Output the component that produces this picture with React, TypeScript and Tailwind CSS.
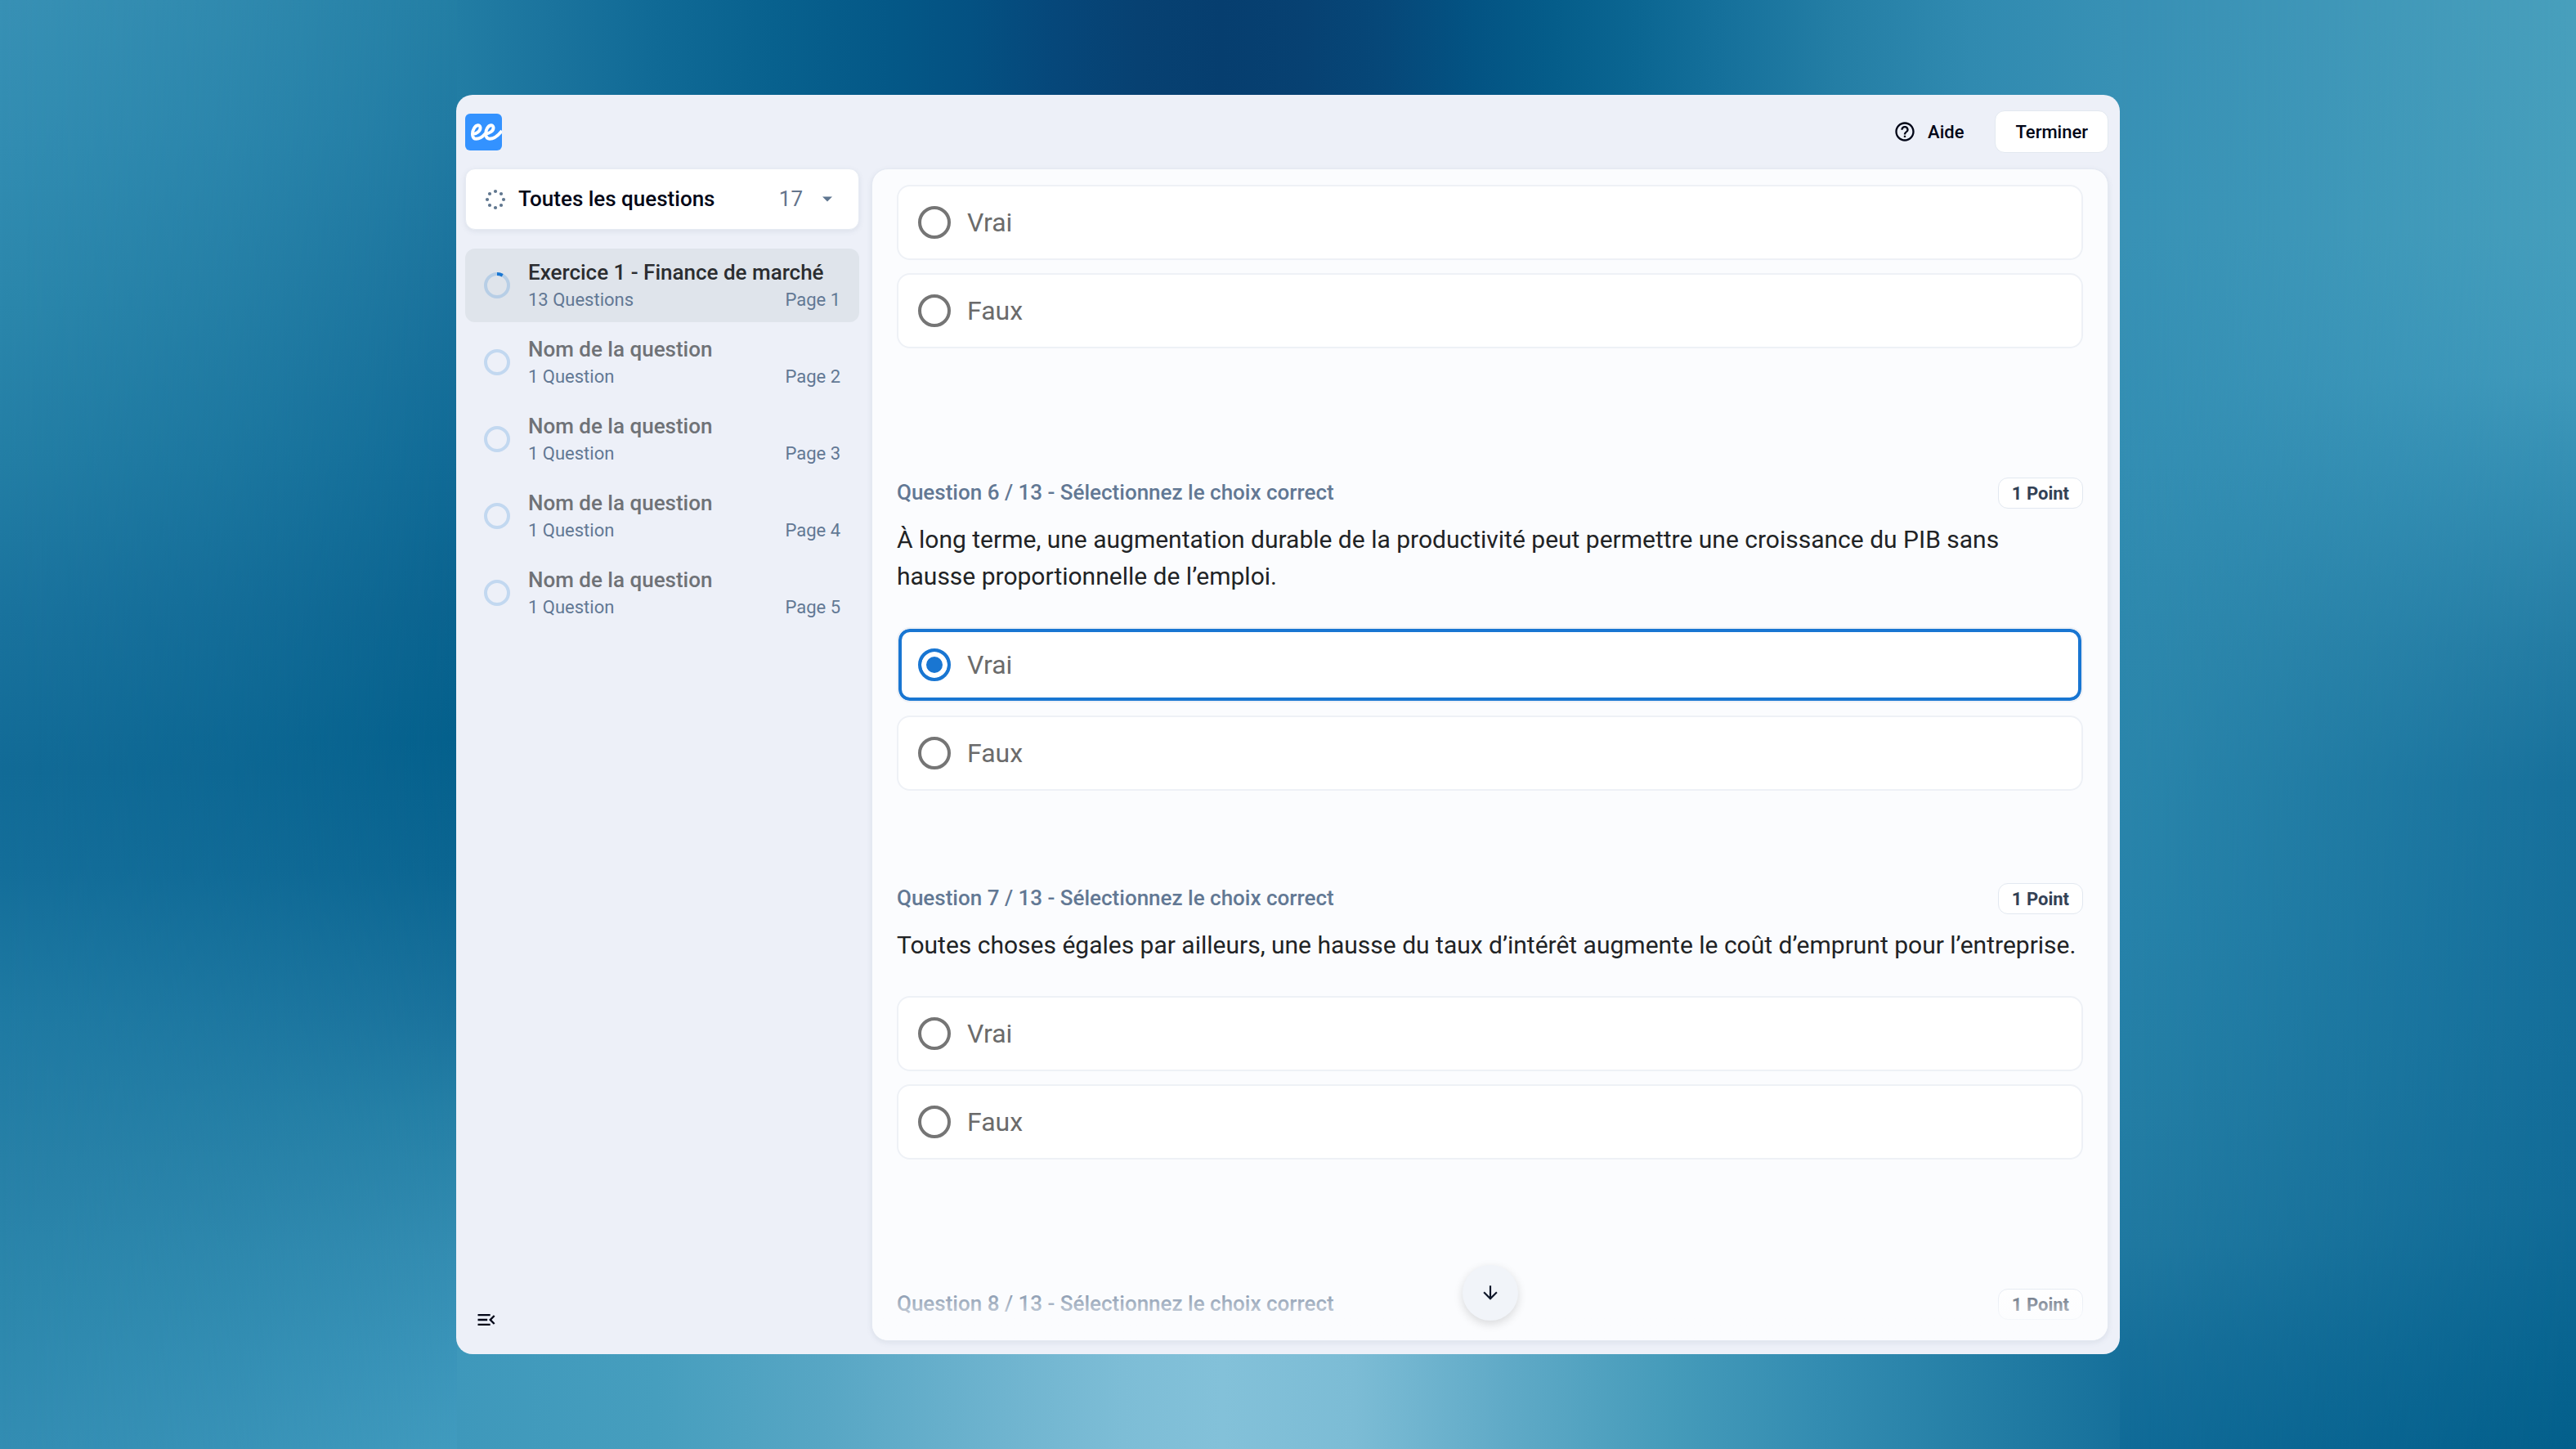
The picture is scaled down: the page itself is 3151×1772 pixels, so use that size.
import { useState } from "react";
import { MdArrowDownward, MdHelpOutline, MdMenuOpen } from "react-icons/md";

const pages = [
  { title: "Exercice 1 - Finance de marché", count: "13 Questions", progress: 8 },
  { title: "Nom de la question", count: "1 Question", progress: 0 },
  { title: "Nom de la question", count: "1 Question", progress: 0 },
  { title: "Nom de la question", count: "1 Question", progress: 0 },
  { title: "Nom de la question", count: "1 Question", progress: 0 },
];

const questions = [
  {
    id: 6,
    text: "À long terme, une augmentation durable de la productivité peut permettre une croissance du PIB sans hausse proportionnelle de l’emploi.",
  },
  {
    id: 7,
    text: "Toutes choses égales par ailleurs, une hausse du taux d’intérêt augmente le coût d’emprunt pour l’entreprise.",
  },
];

type Stop = [number, string];

// vertical colour ramps, offsets in percent
const farLeft: Stop[] = [
  [0, "#3891b5"], [10, "#328db2"], [21, "#2b87ac"], [32, "#237ea5"], [42, "#1a739e"],
  [53, "#126b97"], [60, "#146e9a"], [70, "#1f7aa3"], [80, "#2780a7"], [89, "#2c87ac"], [100, "#338db3"],
];
const midLeft: Stop[] = [
  [0, "#237ea4"], [9, "#207aa2"], [19, "#1a729c"], [32, "#106a96"], [42, "#0a638f"], [51, "#04608c"],
  [60, "#0b6591"], [70, "#1a729c"], [77, "#2580a6"], [86, "#338cb1"], [93, "#3a94b9"], [100, "#419bbe"],
];
const midRight: Stop[] = [
  [0, "#3890b5"], [16, "#3892b6"], [32, "#338eb3"], [45, "#2d88ad"], [64, "#2783aa"],
  [77, "#247ea5"], [86, "#2079a1"], [93, "#17709b"], [100, "#106b98"],
];
const farRight: Stop[] = [
  [0, "#489fbc"], [16, "#459ebc"], [26, "#3f99bb"], [35, "#318bb0"], [45, "#237ba3"],
  [54, "#17709b"], [70, "#146e9a"], [83, "#116b97"], [93, "#086490"], [100, "#035f8b"],
];
// horizontal ramps between the two inner columns
const top: Stop[] = [
  [0, "#227da4"], [6, "#1a739d"], [12, "#106a96"], [19, "#08618e"], [26, "#045887"], [31, "#045182"],
  [36, "#06477a"], [41, "#074172"], [46, "#063e6f"], [51, "#074172"], [56, "#064879"], [61, "#035383"],
  [66, "#055d8a"], [71, "#0b6692"], [76, "#15709b"], [83, "#247ea5"], [91, "#308ab0"], [100, "#3891b5"],
];
const bottom: Stop[] = [
  [0, "#3e98bb"], [12, "#469ebe"], [22, "#57a6c4"], [33, "#6fb4cf"], [40, "#7dbdd6"], [46, "#83c1d9"], [54, "#7cbcd5"],
  [63, "#60aac7"], [73, "#459bba"], [82, "#338cb1"], [91, "#257fa6"], [100, "#16709b"],
];

function Ramp({ id, stops, horizontal }: { id: string; stops: Stop[]; horizontal?: boolean }) {
  return (
    <linearGradient id={id} x1="0" y1="0" x2={horizontal ? 1 : 0} y2={horizontal ? 0 : 1}>
      {stops.map(([offset, color]) => (
        <stop key={offset} offset={`${offset}%`} stopColor={color} />
      ))}
    </linearGradient>
  );
}

function Backdrop() {
  return (
    <svg
      className="absolute inset-0 h-full w-full"
      viewBox="0 0 3151 1772"
      preserveAspectRatio="none"
      aria-hidden="true"
    >
      <defs>
        <Ramp id="farLeft" stops={farLeft} />
        <Ramp id="midLeft" stops={midLeft} />
        <Ramp id="midRight" stops={midRight} />
        <Ramp id="farRight" stops={farRight} />
        <Ramp id="top" stops={top} horizontal />
        <Ramp id="bottom" stops={bottom} horizontal />
        <linearGradient id="easeIn">
          <stop offset="0" stopColor="#000" />
          <stop offset="0.5" stopColor="#606060" />
          <stop offset="0.8" stopColor="#b8b8b8" />
          <stop offset="1" stopColor="#fff" />
        </linearGradient>
        <linearGradient id="even">
          <stop offset="0" stopColor="#000" />
          <stop offset="1" stopColor="#fff" />
        </linearGradient>
        <mask id="fadeLeft" maskUnits="userSpaceOnUse" x="0" y="0" width="560" height="1772">
          <rect width="559" height="1772" fill="url(#easeIn)" />
        </mask>
        <mask id="fadeRight" maskUnits="userSpaceOnUse" x="2592" y="0" width="560" height="1772">
          <rect x="2593" width="558" height="1772" fill="url(#even)" />
        </mask>
      </defs>
      <rect x="558" width="2036" height="886" fill="url(#top)" />
      <rect x="558" y="886" width="2036" height="886" fill="url(#bottom)" />
      <rect width="559" height="1772" fill="url(#farLeft)" />
      <rect width="559" height="1772" fill="url(#midLeft)" mask="url(#fadeLeft)" />
      <rect x="2593" width="558" height="1772" fill="url(#midRight)" />
      <rect x="2593" width="558" height="1772" fill="url(#farRight)" mask="url(#fadeRight)" />
    </svg>
  );
}

function Logo() {
  return (
    <svg className="size-[45px]" viewBox="0 0 45 45" role="img" aria-label="ee">
      <rect width="45" height="45" rx="6" fill="#3392ff" />
      <path
        d="M9.5 25C13.5 25 19 21 18.5 16.8C18 13 13.4 13.6 11 17.8C8 22.8 8 30.8 13.5 30.8C18 30.8 22 27.5 24.5 24.5C29.5 24.5 35 21 34.5 16.8C34 13 29.4 13.6 27 17.8C24 22.8 24.5 30.8 30 30.8C36 30.8 41 26 45 21"
        fill="none"
        stroke="#fff"
        strokeWidth="3.9"
        strokeLinejoin="round"
      />
    </svg>
  );
}

function DotsIcon() {
  const dots = [[12, 2], [19, 5], [22, 12], [19, 19], [12, 22], [5, 19], [2, 12], [5, 5]];
  return (
    <svg className="size-6 shrink-0 overflow-visible" viewBox="0 0 24 24" fill="#60778f" aria-hidden="true">
      {dots.map(([x, y]) => (
        <circle key={`${x}-${y}`} cx={x} cy={y} r="2.1" />
      ))}
    </svg>
  );
}

function ProgressRing({ value }: { value: number }) {
  return (
    <svg className="size-8 shrink-0" viewBox="0 0 32 32" fill="none" strokeWidth="4" aria-hidden="true">
      <circle cx="16" cy="16" r="14" stroke="#1976d2" strokeOpacity="0.2" />
      {value > 0 && (
        <circle
          cx="16"
          cy="16"
          r="14"
          stroke="#1976d2"
          pathLength="100"
          strokeDasharray={`${value} 100`}
          transform="rotate(-90 16 16)"
        />
      )}
    </svg>
  );
}

function Sidebar() {
  return (
    <aside className="flex w-[482px] shrink-0 flex-col">
      <label className="flex h-[75px] items-center rounded-xl border border-[#e6ebf3] bg-white pr-8 pl-6 shadow-[0_2px_6px_rgba(100,116,139,0.12)]">
        <DotsIcon />
        <select
          aria-label="Filtre"
          className="ml-4 min-w-0 flex-1 appearance-none bg-transparent text-[26px] font-medium text-[#020617] outline-none"
        >
          <option>Toutes les questions</option>
        </select>
        <span className="text-[26px] text-[#64748b]">17</span>
        <svg className="ml-6 h-[7px] w-3" viewBox="0 0 12 7" fill="#5f7690" aria-hidden="true">
          <path d="M0 0.5h12L6 6.5z" />
        </svg>
      </label>

      <nav className="mt-[23px] flex flex-col gap-1">
        {pages.map((page, i) => (
          <a
            key={i}
            href={`#page-${i + 1}`}
            className={`flex h-[90px] items-center gap-[22px] rounded-xl px-[23px] ${i === 0 ? "bg-[#dfe4eb]" : ""}`}
          >
            <ProgressRing value={page.progress} />
            <span className="flex min-w-0 flex-1 flex-col">
              <span
                className={`text-[26px] leading-9 font-medium ${i === 0 ? "text-[#2b2d30]" : "text-[#6f7277]"}`}
              >
                {page.title}
              </span>
              <span className="flex justify-between text-[22px] leading-8 text-[#627894]">
                <span>{page.count}</span>
                <span>Page {i + 1}</span>
              </span>
            </span>
          </a>
        ))}
      </nav>

      <button type="button" aria-label="Réduire le menu" className="mt-auto mb-3 ml-3 self-start text-[#020617]">
        <MdMenuOpen className="size-7" />
      </button>
    </aside>
  );
}

function Choices({ name, value }: { name: string; value?: string }) {
  const [selected, setSelected] = useState(value);
  return (
    <div className="flex flex-col gap-4">
      {["Vrai", "Faux"].map((choice) => (
        <label
          key={choice}
          className="flex h-[92px] items-center gap-5 rounded-2xl border-2 border-[#eef1f6] bg-white px-6 text-[32px] text-[#6b6b6b] has-checked:shadow-[inset_0_0_0_4px_#1976d2]"
        >
          <input
            type="radio"
            name={name}
            checked={selected === choice}
            onChange={() => setSelected(choice)}
            className="size-10 appearance-none rounded-full border-4 border-[#757575] checked:border-[#1976d2] checked:bg-[#1976d2] checked:shadow-[inset_0_0_0_6px_#fff]"
          />
          {choice}
        </label>
      ))}
    </div>
  );
}

function QuestionHeader({ id }: { id: number }) {
  return (
    <div className="flex h-[38px] items-start justify-between">
      <h2 className="text-[26px] leading-9 font-medium text-[#627894]">
        Question {id} / 13 - Sélectionnez le choix correct
      </h2>
      <span className="flex h-[38px] items-center rounded-xl border border-[#e2e8f0] bg-white px-4 text-[22px] font-bold text-[#334155]">
        1 Point
      </span>
    </div>
  );
}

export default function App() {
  return (
    <div className="relative flex h-screen justify-center py-[116px] font-[Roboto,sans-serif]">
      <Backdrop />
      <div className="relative flex w-full max-w-[2035px] flex-col rounded-[20px] bg-[#edf0f8] pr-[14px] pb-4 pl-[11px]">
        <header className="flex h-[90px] shrink-0 items-center justify-between">
          <Logo />
          <div className="flex items-center gap-3.5 text-[22px] font-medium text-[#020617]">
            <button type="button" className="flex h-[52px] items-center gap-3.5 px-6">
              <MdHelpOutline className="size-7" />
              Aide
            </button>
            <button type="button" className="h-[52px] rounded-xl border border-[#e2e8f0] bg-white px-6">
              Terminer
            </button>
          </div>
        </header>

        <div className="flex min-h-0 flex-1 gap-[15px]">
          <Sidebar />

          <main className="relative min-w-0 flex-1 overflow-hidden rounded-[20px] border border-[#e4e9f2] bg-[#fbfcfe] px-[30px] pt-[19px] shadow-[0_2px_6px_rgba(100,116,139,0.12)]">
            <section className="min-h-[358px]">
              <Choices name="question-5" />
            </section>

            {questions.map((q) => (
              <section key={q.id} className="min-h-[496px]">
                <QuestionHeader id={q.id} />
                <p className="mt-[15px] mb-10 text-[30px] leading-[45px] text-[#212325]">{q.text}</p>
                <Choices name={`question-${q.id}`} value={q.id === 6 ? "Vrai" : undefined} />
              </section>
            ))}

            <section className="min-h-[496px]">
              <QuestionHeader id={8} />
            </section>

            <div className="pointer-events-none absolute inset-x-0 bottom-0 h-[75px] bg-linear-to-b from-[#fbfcfe]/0 to-[#fbfcfe] to-90%" />
            <div className="pointer-events-none absolute inset-x-0 bottom-6 flex justify-center">
              <button
                type="button"
                aria-label="Question suivante"
                className="pointer-events-auto flex size-[68px] items-center justify-center rounded-full bg-[#f1f4f9] text-[#0f172a] shadow-[0_4px_12px_rgba(0,0,0,0.14)]"
              >
                <MdArrowDownward className="size-[26px]" />
              </button>
            </div>
          </main>
        </div>
      </div>
    </div>
  );
}
